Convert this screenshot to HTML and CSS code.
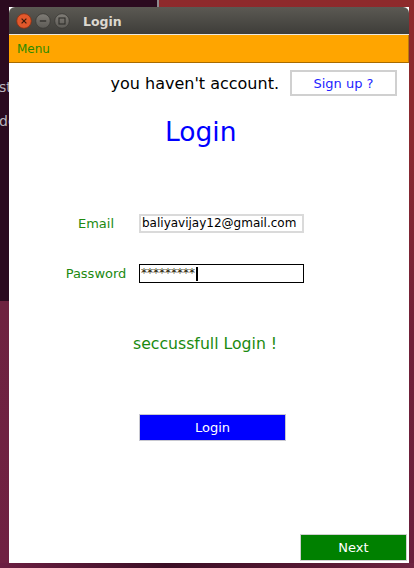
FILE: index.html
```html
<!DOCTYPE html>
<html>
<head>
<meta charset="utf-8">
<link rel="stylesheet" href="styles.css">
</head>
<body>
<div class="desktop">
  <div class="term-text"><span>st</span><span>de</span></div>
  <div class="window">
    <div class="titlebar">
      <div class="wm-buttons">
        <svg width="16" height="16" viewBox="0 0 16 16"><circle cx="8" cy="8" r="7.3" fill="#e2582b" stroke="#8a2f12" stroke-width="0.8"/><path d="M5.6 5.6 L10.4 10.4 M10.4 5.6 L5.6 10.4" stroke="#3b1a0c" stroke-width="1.2"/></svg>
        <svg width="16" height="16" viewBox="0 0 16 16"><defs><linearGradient id="g1" x1="0" y1="0" x2="0" y2="1"><stop offset="0" stop-color="#807d77"/><stop offset="1" stop-color="#5c5a55"/></linearGradient></defs><circle cx="8" cy="8" r="7.3" fill="url(#g1)" stroke="#3a3935" stroke-width="0.8"/><path d="M4.8 8 H11.2" stroke="#2f2e2b" stroke-width="1.3"/></svg>
        <svg width="16" height="16" viewBox="0 0 16 16"><circle cx="8" cy="8" r="7.3" fill="url(#g1)" stroke="#3a3935" stroke-width="0.8"/><rect x="5" y="5" width="6" height="6" fill="none" stroke="#2f2e2b" stroke-width="1.1"/></svg>
      </div>
      <span class="title">Login</span>
    </div>
    <div class="menubar"><span class="menu">Menu</span></div>
    <div class="content">
      <div class="account-row">
        <span class="account-text">you haven't account.</span>
        <button class="signup">Sign up ?</button>
      </div>
      <h1 class="heading">Login</h1>
      <div class="form">
        <label class="label">Email</label>
        <div class="field field-email">baliyavijay12@gmail.com</div>
        <label class="label">Password</label>
        <div class="field field-pass"><span class="stars">*********</span><span class="cursor"></span></div>
      </div>
      <p class="message">seccussfull Login !</p>
      <button class="login-btn">Login</button>
      <button class="next-btn">Next</button>
    </div>
  </div>
</div>
</body>
</html>
```
FILE: styles.css
```css
html, body {
  margin: 0;
  padding: 0;
}
body {
  width: 414px;
  height: 568px;
  overflow: hidden;
  font-family: "DejaVu Sans", sans-serif;
}
.desktop {
  position: relative;
  width: 414px;
  height: 568px;
  box-sizing: border-box;
  padding: 7px 0 0 9px;
  background:
    linear-gradient(#2b0a1f, #2b0a1f) 0 0 / 157px 301px no-repeat,
    linear-gradient(#8d8a90, #8d8a90) 157px 0 / 2px 7px no-repeat,
    linear-gradient(to right, #6c1f42, #3b0e25 40%, #5a1a35 80%, #6e2340) 0 563px / 414px 5px no-repeat,
    linear-gradient(to bottom, #6e2240 0, #702142 100%) 0 301px / 9px 267px no-repeat,
    linear-gradient(to bottom, #8e2a2c 0, #8a2a30 25%, #702038 60%, #6a1f3c 100%);
}
.term-text {
  position: absolute;
  left: -1px;
  top: 78px;
  display: flex;
  flex-direction: column;
  gap: 16px;
  color: #b9b4bd;
  font-size: 14px;
  line-height: 18px;
}
.window {
  position: relative;
  width: 400px;
  height: 556px;
  display: flex;
  flex-direction: column;
  background: #fff;
}
.titlebar {
  height: 28px;
  box-sizing: border-box;
  display: flex;
  align-items: center;
  padding: 0 0 0 7px;
  border-radius: 6px 6px 0 0;
  background: linear-gradient(to bottom, #5b5953, #3e3d39);
  border-bottom: 1px solid #ece9df;
}
.wm-buttons {
  display: flex;
  gap: 3px;
  margin-top: 1px;
}
.wm-buttons svg {
  display: block;
}
.title {
  margin-left: 13px;
  color: #dcd8cf;
  font-weight: bold;
  font-size: 12.5px;
  margin-top: 1px;
}
.menubar {
  height: 28px;
  box-sizing: border-box;
  background: #ffa500;
  border-bottom: 1px solid #a86b00;
  border-right: 1px solid #b87a10;
  display: flex;
  align-items: center;
  padding-left: 8px;
}
.menu {
  color: #2b8a00;
  font-size: 12px;
  margin-top: 1px;
}
.content {
  flex: 1;
  display: flex;
  flex-direction: column;
  align-items: flex-start;
}
.account-row {
  align-self: stretch;
  display: flex;
  justify-content: flex-end;
  align-items: center;
  gap: 11px;
  padding: 7px 12px 0 0;
}
.account-text {
  font-size: 16px;
  color: #000;
}
.signup {
  width: 107px;
  height: 26px;
  box-sizing: border-box;
  border: 2px solid #d0d0d0;
  background: #fff;
  color: #2323ff;
  font-family: "DejaVu Sans", sans-serif;
  font-size: 13px;
  padding: 0;
}
.heading {
  margin: 20px 0 0 156px;
  font-weight: normal;
  font-size: 26.5px;
  line-height: 31px;
  color: #0000ff;
}
.form {
  margin: 67px 0 0 51px;
  display: grid;
  grid-template-columns: 72px 165px;
  column-gap: 7px;
  row-gap: 31px;
  align-items: center;
}
.label {
  text-align: center;
  color: #218a10;
  font-size: 13px;
}
.field {
  height: 19px;
  box-sizing: border-box;
  font-size: 12px;
  line-height: 15px;
  color: #000;
  display: flex;
  align-items: center;
  overflow: hidden;
  white-space: nowrap;
}
.field-email {
  border: 2px solid #dadada;
  padding-left: 1px;
}
.field-pass {
  border: 1.5px solid #000;
  padding-left: 1px;
}
.stars {
  letter-spacing: 0;
  color: #2a1a00;
  font-size: 12px;
}
.cursor {
  width: 2px;
  height: 14px;
  background: #000;
  margin-left: 1px;
}
.message {
  margin: 51px 0 0 124px;
  font-size: 15.7px;
  line-height: 19px;
  color: #1a8a10;
}
.login-btn {
  margin: 61px 0 0 130px;
  width: 147px;
  height: 27px;
  box-sizing: border-box;
  border: 1px solid #c8c8d0;
  background: #0000ff;
  color: #fff;
  font-family: "DejaVu Sans", sans-serif;
  font-size: 13px;
  padding: 0;
}
.next-btn {
  margin: auto 2px 2px 0;
  align-self: flex-end;
  width: 107px;
  height: 27px;
  box-sizing: border-box;
  border: 1px solid #cfd0cf;
  background: #008000;
  color: #fff;
  font-family: "DejaVu Sans", sans-serif;
  font-size: 13px;
  padding: 0;
}
```
